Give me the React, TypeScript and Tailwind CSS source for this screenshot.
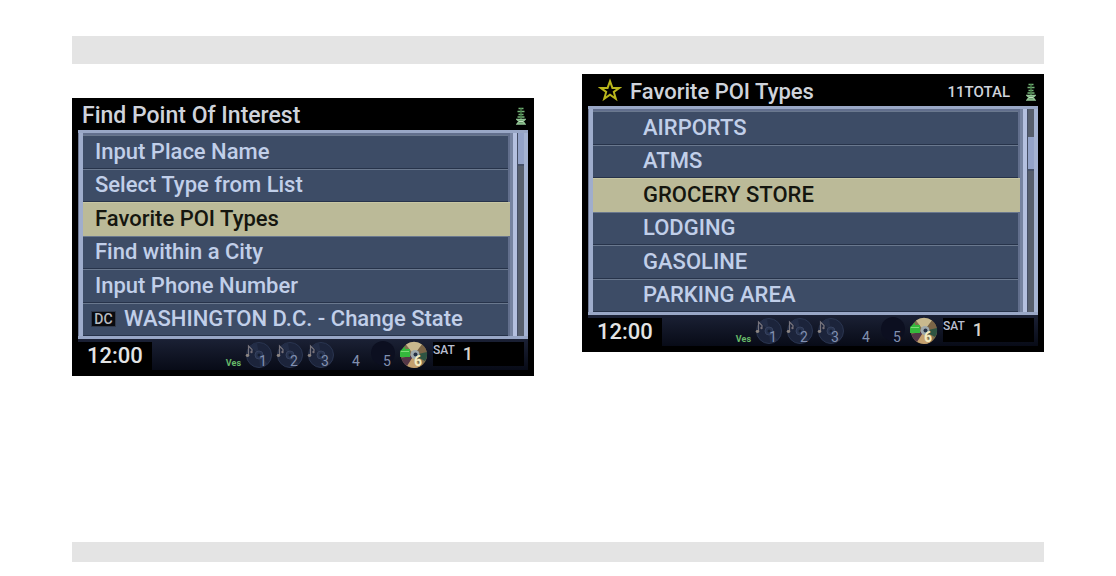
import React from 'react'

interface MenuItem {
  label: string
  badge?: string
}

interface NavScreenProps {
  title: string
  items: MenuItem[]
  selected: number
  indented?: boolean
  starred?: boolean
  total?: string
  thumbClass: string
}

const findItems: MenuItem[] = [
  { label: 'Input Place Name' },
  { label: 'Select Type from List' },
  { label: 'Favorite POI Types' },
  { label: 'Find within a City' },
  { label: 'Input Phone Number' },
  { label: 'WASHINGTON D.C. - Change State', badge: 'DC' }
]

const favoriteItems: MenuItem[] = [
  { label: 'AIRPORTS' },
  { label: 'ATMS' },
  { label: 'GROCERY STORE' },
  { label: 'LODGING' },
  { label: 'GASOLINE' },
  { label: 'PARKING AREA' }
]

const StarIcon = () => (
  <svg viewBox="0 0 24 24" className="w-6 h-6 shrink-0" fill="none" stroke="#b9b61c" strokeWidth="2" aria-hidden="true">
    <path d="M12 3.2 14.4 9.9H21.4L15.8 14 17.8 20.8 12 16.7 6.2 20.8 8.2 14 2.6 9.9H9.6Z" />
  </svg>
)

const SatelliteIcon = () => (
  <svg viewBox="0 0 10 18" className="w-[10px] h-[18px] mt-1 shrink-0" fill="none" stroke="#76b578" strokeWidth="1.3" aria-hidden="true">
    <path d="M2.5 1.5H7.5M1.5 4.5H8.5M2.5 7.5H7.5M1.5 10H8.5" />
    <path d="M5 1V12" stroke="#48804b" />
    <path d="M1 12.5H9L7 14.5 9 17H1L3 14.5Z" fill="#5c935e" stroke="#93c596" />
    <path d="M3 14.5H7" stroke="#c0dfbf" />
  </svg>
)

// One slot of the six disc changer
function DiscSlot({ slot }: { slot: number }) {
  const hasMusic = slot <= 3
  const isPlaying = slot === 6

  return (
    <svg viewBox="0 0 31 28" className="w-[31px] h-7 shrink-0" role="img" aria-label={`Disc ${slot}`}>
      {hasMusic && (
        <g>
          <circle cx="14" cy="14" r="12.5" fill="#1c243b" stroke="#2a3550" />
          <path d="M14 14 5 5A12.5 12.5 0 0 1 12 2ZM14 14 23 23A12.5 12.5 0 0 1 15 26Z" fill="#232d47" />
          <circle cx="14" cy="14" r="4" fill="#28334f" stroke="#36425f" />
          <circle cx="14" cy="14" r="1.5" fill="#151d30" />
          <path d="M3.5 14V5L7 8.5V10" fill="none" stroke="#77747d" strokeWidth="1.2" />
          <ellipse cx="2.5" cy="14.5" rx="1.8" ry="1.4" fill="#8c8582" />
          <circle cx="6.5" cy="11" r="1.2" fill="#777179" />
        </g>
      )}
      {slot === 5 && <circle cx="14" cy="12" r="12" fill="#0c0f20" />}
      {isPlaying && (
        <g>
          <circle cx="14" cy="14" r="13" fill="#80704f" />
          <path d="M14 14 6 3.5A13 13 0 0 1 22 3.5Z" fill="#c9b98e" />
          <path d="M14 14 22 3.5A13 13 0 0 1 27 12Z" fill="#7b6547" />
          <path d="M14 14 27 11A13 13 0 0 1 25 20Z" fill="#2e5442" />
          <path d="M14 14 6 24A13 13 0 0 0 20 25.5Z" fill="#c4a06e" />
          <path d="M14 14 1.5 17A13 13 0 0 0 7 25Z" fill="#543747" />
          <circle cx="15" cy="13.5" r="4.5" fill="#9ea8ac" />
          <circle cx="15.5" cy="13.5" r="2" fill="#263144" />
          <path d="M0 10 5 5.5V8H10V16H0Z" fill="#35b83c" />
          <path d="M1 10.5H9" stroke="#7edb77" />
        </g>
      )}
      <text
        x="18"
        y="25"
        textAnchor="middle"
        className={isPlaying ? "fill-[#f5ecc0] font-['Roboto',sans-serif] text-sm font-bold" : "fill-[#8290b0] font-['Roboto',sans-serif] text-sm"}
      >
        {slot}
      </text>
    </svg>
  )
}

function StatusBar() {
  return (
    <div className="mx-[6px] h-[31px] flex items-start bg-linear-to-b from-[#1b2135] to-[#080b17]">
      <time className="w-[74px] h-7 mt-[3px] pl-[9px] bg-black text-[#e2e3e4] text-[22px] leading-7 font-medium">12:00</time>
      <span className="w-[93px] pr-1 pt-4 text-right text-[#67b869] text-[9px] leading-4 font-bold">Ves</span>
      <div className="flex pt-[2px]">
        {[1, 2, 3, 4, 5, 6].map(slot => <DiscSlot key={slot} slot={slot} />)}
      </div>
      <div className="flex-1 h-6 mt-[3px] mr-1 ml-[2px] flex bg-black text-[#b9bed0]">
        <span className="text-xs leading-4 font-medium">SAT</span>
        <span className="pl-2 text-lg leading-6 font-medium text-[#d8d4cb]">1</span>
      </div>
    </div>
  )
}

function NavScreen({ title, items, selected, indented, starred, total, thumbClass }: NavScreenProps) {
  const [active, setActive] = React.useState(selected)

  return (
    <section className="bg-black pb-[6px] font-['Roboto',sans-serif]">
      <header className={`h-8 flex items-center pr-2 text-[#cfd3db] ${starred ? 'pl-4' : 'pl-[10px]'}`}>
        {starred && <StarIcon />}
        <h2 className={`flex-1 whitespace-nowrap font-medium leading-8 pt-1 ${starred ? 'pl-2 text-[22px]' : 'text-[23px]'}`}>{title}</h2>
        {total && <span className="pr-4 text-[15px] leading-8 pt-1 font-medium">{total}</span>}
        <SatelliteIcon />
      </header>

      <div className="mx-[6px] flex border-t-[3px] border-b-[3px] border-[#99a7c6] bg-[#626f8d]">
        <div className="w-[5px] bg-[#9fadcc] border-l border-[#6d7893]" />
        <ul className="flex-1 h-[203px] pt-[2px] grid grid-rows-6">
          {items.map((item, i) => (
            <li key={item.label} className="flex">
              <button
                type="button"
                onClick={() => setActive(i)}
                className={`flex-1 flex items-center text-left whitespace-nowrap text-[22px] leading-8 font-medium ${indented ? 'pl-[50px]' : item.badge ? 'pl-2' : 'pl-3'} ${active === i ? 'bg-[#bbba98] text-[#15160f] border-t border-[#c8c7a4]' : 'mr-[2px] bg-[#3d4c66] text-[#c1cfe9] border-t border-t-[#6a788e] border-b border-b-[#27334a]'}`}
              >
                {item.badge && (
                  <span className="w-[25px] h-4 mr-2 bg-[#090b10] border border-[#30394b] text-[#b9bbc0] text-sm leading-[14px] text-center">{item.badge}</span>
                )}
                {item.label}
              </button>
            </li>
          ))}
        </ul>
        <div className="w-[18px] flex">
          <div className="w-[3px] bg-[#7683a0]" />
          <div className="w-1 bg-[#b4c0df]" />
          <div className="w-[7px] bg-[#565e6c] border-l border-[#454e65]">
            <div className={thumbClass} />
          </div>
          <div className="w-1 bg-[#a5b3d2]" />
        </div>
      </div>

      <StatusBar />
    </section>
  )
}

export default function App() {
  return (
    <main className="min-h-screen bg-white px-[72px] pt-9">
      <div className="h-7 bg-[#e4e4e4]" />
      <div className="grid grid-cols-2 gap-12 items-start">
        <div className="pt-[34px]">
          <NavScreen title="Find Point Of Interest" items={findItems} selected={2} thumbClass="h-[33px] bg-[#94a3c8] border-b-2 border-[#465168]" />
        </div>
        <div className="pt-[10px]">
          <NavScreen
            title="Favorite POI Types"
            items={favoriteItems}
            selected={2}
            indented
            starred
            total="11TOTAL"
            thumbClass="h-[34px] mt-7 bg-[#94a3c8] border-b-2 border-[#465168]"
          />
        </div>
      </div>
      <div className="mt-[166px] h-5 bg-[#e4e4e4]" />
    </main>
  )
}
